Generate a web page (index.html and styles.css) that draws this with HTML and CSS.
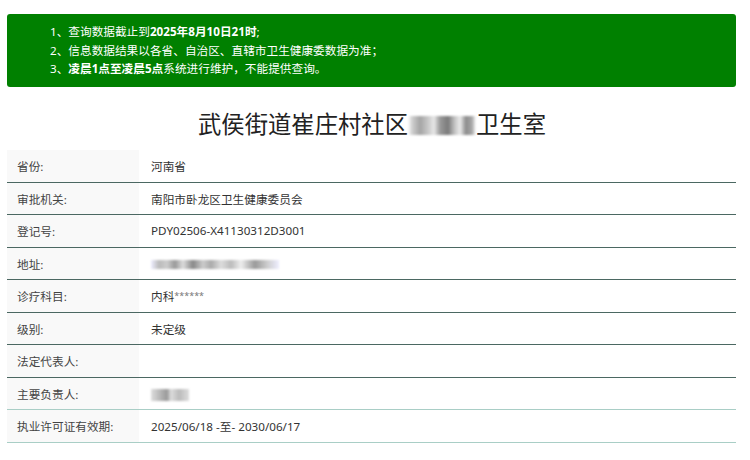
FILE: index.html
```html
<!DOCTYPE html>
<html lang="zh-CN">
<head>
<meta charset="utf-8">
<title>查询结果</title>
<link rel="stylesheet" href="styles.css">
</head>
<body>
<div class="page">
  <div class="notice">
    <p>1、查询数据截止到<b>2025年8月10日21时</b>;</p>
    <p>2、信息数据结果以各省、自治区、直辖市卫生健康委数据为准；</p>
    <p>3、<b>凌晨1点至凌晨5点</b>系统进行维护，不能提供查询。</p>
  </div>
  <h1 class="title">武侯街道崔庄村社区<span class="blur blur-title"></span>卫生室</h1>
  <div class="table">
    <div class="row"><div class="label">省份:</div><div class="value">河南省</div></div>
    <div class="row"><div class="label">审批机关:</div><div class="value">南阳市卧龙区卫生健康委员会</div></div>
    <div class="row"><div class="label">登记号:</div><div class="value">PDY02506-X41130312D3001</div></div>
    <div class="row"><div class="label">地址:</div><div class="value"><span class="blur blur-addr"></span></div></div>
    <div class="row"><div class="label">诊疗科目:</div><div class="value">内科<span class="stars">******</span></div></div>
    <div class="row"><div class="label">级别:</div><div class="value">未定级</div></div>
    <div class="row"><div class="label">法定代表人:</div><div class="value"></div></div>
    <div class="row light"><div class="label">主要负责人:</div><div class="value"><span class="blur blur-name"></span></div></div>
    <div class="row light"><div class="label">执业许可证有效期:</div><div class="value">2025/06/18 -至- 2030/06/17</div></div>
  </div>
</div>
</body>
</html>
```

FILE: styles.css
```css
html, body {
  margin: 0;
  padding: 0;
  background: #ffffff;
}
body {
  font-family: "Noto Sans", "Noto Sans CJK SC", sans-serif;
  color: #333;
}
.page {
  width: 729px;
  padding: 14px 0 0 7px;
}
.notice {
  background: #008000;
  border-radius: 3px;
  color: #fff;
  height: 73px;
  box-sizing: border-box;
  padding: 9px 0 0 43px;
  font-size: 11.67px;
  line-height: 18.5px;
}
.notice p {
  margin: 0;
}
.notice b {
  font-weight: 700;
}
.title {
  margin: 21px 0 10px;
  text-align: center;
  font-size: 23.33px;
  line-height: 32px;
  font-weight: 400;
  color: #222;
  padding-left: 1px;
}
.blur {
  display: inline-block;
  filter: blur(1.2px);
}
.blur-title {
  width: 68px;
  height: 19px;
  vertical-align: -2px;
  background: linear-gradient(90deg, #fff 0px, #d0d0d0 4px, #a4a4a4 12px, #c8c8c8 20px, #e8e8e8 26px, #9a9a9a 32px, #7a7a7a 40px, #bdbdbd 46px, #ececec 52px, #8c8c8c 58px, #a8a8a8 64px, #fff 68px);
}
.blur-addr {
  width: 128px;
  height: 9px;
  vertical-align: middle;
  background: linear-gradient(90deg, #eef 0px, #bbb 8px, #ccc 16px, #999 24px, #ddd 32px, #888 42px, #ccc 52px, #aaa 60px, #ddd 70px, #bbb 80px, #eee 90px, #999 104px, #ccc 116px, #eef 128px);
}
.blur-name {
  width: 38px;
  height: 12px;
  vertical-align: middle;
  background: linear-gradient(90deg, #ddd 0px, #bbb 8px, #999 16px, #ddd 20px, #bbb 28px, #ddd 38px);
}
.table {
  font-size: 11.67px;
  color: #444;
}
.row {
  display: flex;
  height: 32.5px;
  align-items: center;
  border-bottom: 1px solid #4b6862;
  box-sizing: border-box;
}
.row.light {
  border-bottom-color: #a9cec6;
}
.label {
  width: 132px;
  align-self: stretch;
  display: flex;
  align-items: center;
  padding-left: 10px;
  box-sizing: border-box;
  background: #f9f9f9;
  color: #444;
}
.value {
  padding-left: 12px;
  color: #333;
}
.stars {
  font-size: 9px;
  vertical-align: 2px;
  color: #777;
}
```
